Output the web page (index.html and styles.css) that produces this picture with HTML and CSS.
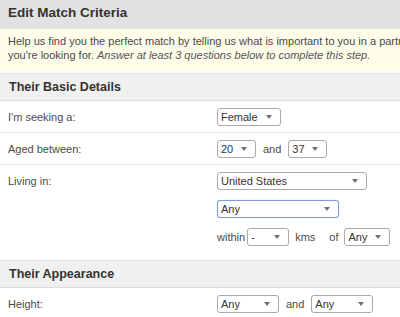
FILE: index.html
```html
<!DOCTYPE html>
<html lang="en">
  <head>
    <meta charset="UTF-8" />
    <title>Edit Match Criteria</title>
    <link rel="stylesheet" href="styles.css">
  </head>
  <body>
    <div class="panel">
      <h1 class="panel-title">Edit Match Criteria</h1>

      <div class="notice">
        Help us find you the perfect match by telling us what is important to you in a partner and what
        <br />
        you're looking for. <em>Answer at least 3 questions below to complete this step.</em>
      </div>

      <div class="section">
        <h2 class="section-title">Their Basic Details</h2>

        <div class="row">
          <div class="label">I'm seeking a:</div>
          <div class="fields">
            <div class="line">
              <span class="select w-female">Female<i class="arrow"></i></span>
            </div>
          </div>
        </div>

        <div class="row">
          <div class="label">Aged between:</div>
          <div class="fields">
            <div class="line">
              <span class="select w-age">20<i class="arrow"></i></span>
              <span class="word and">and</span>
              <span class="select w-age">37<i class="arrow"></i></span>
            </div>
          </div>
        </div>

        <div class="row row-last">
          <div class="label">Living in:</div>
          <div class="fields">
            <div class="line">
              <span class="select w-country">United States<i class="arrow"></i></span>
            </div>
            <div class="line">
              <span class="select w-region focused">Any<i class="arrow"></i></span>
            </div>
            <div class="line">
              <span class="word within">within</span>
              <span class="select w-dist">-<i class="arrow"></i></span>
              <span class="word kms">kms</span>
              <span class="word of">of</span>
              <span class="select w-of">Any<i class="arrow"></i></span>
            </div>
          </div>
        </div>
      </div>

      <div class="section">
        <h2 class="section-title">Their Appearance</h2>

        <div class="row">
          <div class="label">Height:</div>
          <div class="fields">
            <div class="line">
              <span class="select w-height">Any<i class="arrow"></i></span>
              <span class="word and">and</span>
              <span class="select w-height">Any<i class="arrow"></i></span>
            </div>
          </div>
        </div>
      </div>
    </div>
  </body>
</html>
```

FILE: styles.css
```css
body {
  margin: 0;
  font-family: "Liberation Sans", Arial, sans-serif;
  color: #4a4a4a;
  background-color: #fff;
  overflow: hidden;
}

.panel {
  width: 560px;
}

.panel-title {
  margin: 0;
  height: 29px;
  padding-left: 8px;
  line-height: 25px;
  font-size: 13.5px;
  font-weight: bold;
  color: #333;
  background-color: #e2e2e2;
}

.notice {
  margin: 0 0 2px;
  height: 42px;
  box-sizing: border-box;
  padding: 5px 8px 0;
  font-size: 11px;
  line-height: 14px;
  color: #4a4a4a;
  background-color: #fdfdea;
  white-space: nowrap;
}

.notice em {
  color: #555;
}

.section-title {
  margin: 0;
  height: 28px;
  box-sizing: border-box;
  padding-left: 9px;
  line-height: 27px;
  font-size: 12.5px;
  font-weight: bold;
  color: #333;
  background-color: #f0f0f0;
  border-top: 1px solid #e4e4e4;
  border-bottom: 1px solid #dcdcdc;
}

.row {
  display: flex;
  padding: 7px 0 6px;
  border-bottom: 1px solid #e6e6e6;
}

.row-last {
  border-bottom: none;
  padding-bottom: 14px;
}

.label {
  width: 209px;
  padding-left: 8px;
  font-size: 11px;
  line-height: 18px;
  color: #4a4a4a;
}

.fields {
  display: flex;
  flex-direction: column;
  gap: 10px;
}

.line {
  display: flex;
  align-items: center;
  height: 18px;
  font-size: 11px;
}

.select {
  position: relative;
  display: inline-block;
  box-sizing: border-box;
  height: 18px;
  padding-left: 3px;
  line-height: 16px;
  font-size: 11px;
  color: #333;
  border: 1px solid #aaa;
  border-radius: 3px;
  background-color: #fff;
}

.select.focused {
  border-color: #7a9fd0;
  box-shadow: 0 0 1px #9ab9e2;
}

.arrow {
  position: absolute;
  right: 8px;
  top: 6px;
  width: 0;
  height: 0;
  border-left: 3.5px solid transparent;
  border-right: 3.5px solid transparent;
  border-top: 4px solid #707070;
}

.word {
  color: #4a4a4a;
  font-size: 11px;
}

.and {
  margin: 0 7px;
}

.within {
  margin-right: 2px;
}

.kms {
  margin-left: 6px;
}

.of {
  margin: 0 6px 0 14px;
}

.w-female { width: 64px; }
.w-age { width: 39px; }
.w-country { width: 150px; }
.w-region { width: 122px; }
.w-dist { width: 42px; }
.w-of { width: 46px; }
.w-height { width: 62px; }
```
